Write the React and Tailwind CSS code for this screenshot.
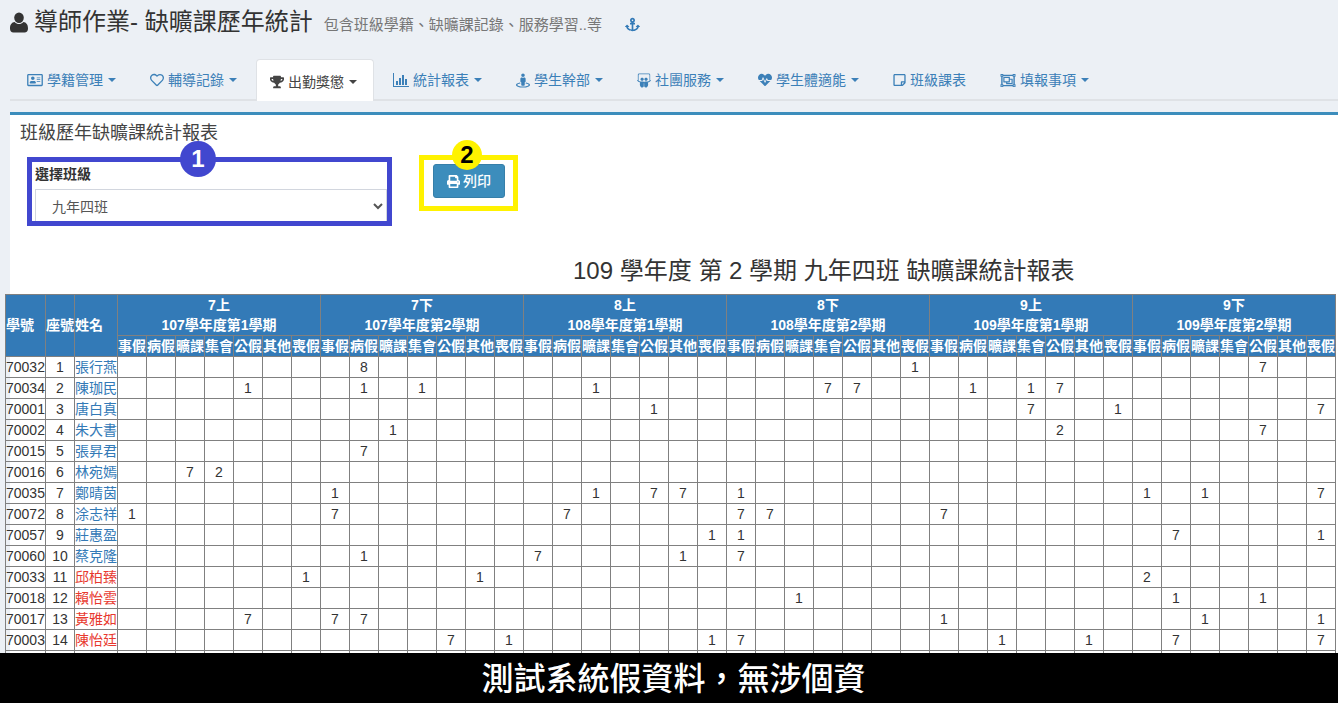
import React from "react";
import {
  FaAnchor,
  FaRegAddressCard,
  FaRegHeart,
  FaTrophy,
  FaStreetView,
  FaSlideshare,
  FaHeartbeat,
  FaRegStickyNote,
  FaRegObjectGroup,
  FaPrint,
} from "react-icons/fa";

const UserIcon = ({ className }) => (
  <svg viewBox="0 0 18 20" className={className} fill="currentColor">
    <ellipse cx="9" cy="5.2" rx="4.8" ry="5.2" />
    <path d="M4.6 9.6C6 11 7.4 11.6 9 11.6s3-.6 4.4-2C16.2 10 18 12 18 16.2 18 18.6 16.6 20 14.6 20H3.4C1.4 20 0 18.6 0 16.2 0 12 1.8 10 4.6 9.6z" />
  </svg>
);

const BarChartIcon = ({ className }) => (
  <svg viewBox="0 0 16 14" className={className} fill="currentColor">
    <path d="M0 0h1v13h15v1H0z" />
    <path d="M3 8h2v4H3zM6 5h2v7H6zM9 2h2v10H9zM12 6h2v6h-2z" />
  </svg>
);

const tabs = [
  { label: "學籍管理", icon: <FaRegAddressCard className="w-[16px] h-[14px]" />, caret: true },
  { label: "輔導記錄", icon: <FaRegHeart className="w-[14px] h-[14px]" />, caret: true },
  { label: "出勤獎懲", icon: <FaTrophy className="w-[14px] h-[14px]" />, caret: true, active: true },
  { label: "統計報表", icon: <BarChartIcon className="w-[16px] h-[14px]" />, caret: true },
  { label: "學生幹部", icon: <FaStreetView className="w-[14px] h-[15px]" />, caret: true },
  { label: "社團服務", icon: <FaSlideshare className="w-[14px] h-[15px]" />, caret: true },
  { label: "學生體適能", icon: <FaHeartbeat className="w-[14px] h-[14px]" />, caret: true },
  { label: "班級課表", icon: <FaRegStickyNote className="w-[13px] h-[14px]" /> },
  { label: "填報事項", icon: <FaRegObjectGroup className="w-[16px] h-[15px]" />, caret: true },
];

const semesters = [
  ["7上", "107學年度第1學期"],
  ["7下", "107學年度第2學期"],
  ["8上", "108學年度第1學期"],
  ["8下", "108學年度第2學期"],
  ["9上", "109學年度第1學期"],
  ["9下", "109學年度第2學期"],
];

const kinds = ["事假", "病假", "曠課", "集會", "公假", "其他", "喪假"];

// marks: column index (0-41) -> value
const students = [
  { id: "70032", seat: 1, name: "張行燕", marks: { 8: 8, 27: 1, 39: 7 } },
  { id: "70034", seat: 2, name: "陳珈民", marks: { 4: 1, 8: 1, 10: 1, 16: 1, 24: 7, 25: 7, 29: 1, 31: 1, 32: 7 } },
  { id: "70001", seat: 3, name: "唐白真", marks: { 18: 1, 31: 7, 34: 1, 41: 7 } },
  { id: "70002", seat: 4, name: "朱大書", marks: { 9: 1, 32: 2, 39: 7 } },
  { id: "70015", seat: 5, name: "張昇君", marks: { 8: 7 } },
  { id: "70016", seat: 6, name: "林宛嫣", marks: { 2: 7, 3: 2 } },
  { id: "70035", seat: 7, name: "鄭晴茵", marks: { 7: 1, 16: 1, 18: 7, 19: 7, 21: 1, 35: 1, 37: 1, 41: 7 } },
  { id: "70072", seat: 8, name: "涂志祥", marks: { 0: 1, 7: 7, 15: 7, 21: 7, 22: 7, 28: 7 } },
  { id: "70057", seat: 9, name: "莊惠盈", marks: { 20: 1, 21: 1, 36: 7, 41: 1 } },
  { id: "70060", seat: 10, name: "蔡克隆", marks: { 8: 1, 14: 7, 19: 1, 21: 7 } },
  { id: "70033", seat: 11, name: "邱柏臻", red: true, marks: { 6: 1, 12: 1, 35: 2 } },
  { id: "70018", seat: 12, name: "賴怡雲", red: true, marks: { 23: 1, 36: 1, 39: 1 } },
  { id: "70017", seat: 13, name: "黃雅如", red: true, marks: { 4: 7, 7: 7, 8: 7, 28: 1, 37: 1, 41: 1 } },
  { id: "70003", seat: 14, name: "陳怡廷", red: true, marks: { 11: 7, 13: 1, 20: 1, 21: 7, 30: 1, 33: 1, 36: 7, 41: 7 } },
  { id: "70004", seat: 15, name: "", red: true, marks: {} },
];

const cols = Array.from({ length: 42 }, (_, i) => i);

const App = () => {
  return (
    <div className="relative h-[703px] overflow-hidden bg-[#ecf0f5] text-[14px] text-[#333] font-['Liberation_Sans','Noto_Sans_CJK_TC',sans-serif]">
      {/* page title */}
      <div className="flex items-baseline h-[59px] pt-[5px] pl-[10px]">
        <UserIcon className="w-[18px] h-[21px] shrink-0 mr-[6px] self-center mb-[20px] text-[#333]" />
        <h1 className="text-[24px] leading-[34px] font-normal">導師作業- 缺曠課歷年統計</h1>
        <span className="ml-[11px] text-[15px] text-[#777]">包含班級學籍、缺曠課記錄、服務學習..等</span>
        <FaAnchor className="ml-[23px] w-[15px] h-[15px] text-[#337ab7] self-center mb-[15px]" />
      </div>

      {/* tabs */}
      <div className="flex ml-[10px] pl-[1px] h-[42px] border-b-2 border-[#dfe2e6]">
        {tabs.map((t) => (
          <div
            key={t.label}
            className={
              t.active
                ? "flex items-center h-[42px] pt-[2px] ml-[1px] pl-[13px] pr-[16px] mr-[3px] bg-white border border-b-0 border-[#dfe2e6] rounded-t text-[#444]"
                : "flex items-center h-[40px] pt-[2px] pl-[16px] pr-[15px] mr-[3px] text-[#3c80b8]"
            }
          >
            <span className="mr-[4px] flex items-center">{t.icon}</span>
            <span className="leading-[20px] whitespace-nowrap">{t.label}</span>
            {t.caret && (
              <span className="ml-[5px] w-0 h-0 border-x-4 border-t-4 border-x-transparent border-t-current" />
            )}
          </div>
        ))}
      </div>

      {/* panel */}
      <div className="mt-[11px] ml-[10px] bg-white border-t-[3px] border-[#3c8dbc] h-[600px]">
        <h3 className="h-[36px] pl-[10px] flex items-center text-[18px] font-normal text-[#444]">班級歷年缺曠課統計報表</h3>

        <div className="flex items-start mt-[4px] pl-[17px]">
          <div className="relative mt-[2px] w-[365px] h-[69px] border-[5px] border-[#4147cf]">
            <div className="h-full overflow-hidden pl-[3px]">
              <div className="font-bold leading-[20px] pt-[2px] mb-[5px] text-[#333]">選擇班級</div>
              <select
                defaultValue="九年四班"
                className="w-full h-[34px] pl-[12px] pt-[2px] bg-white border border-[#d2d6de] text-[14px] text-[#555]"
              >
                <option>九年四班</option>
              </select>
            </div>
            <div className="absolute left-[148px] -top-[21px] w-[36px] h-[36px] rounded-full bg-[#4147cf] text-white font-bold text-[24px] flex items-center justify-center">
              1
            </div>
          </div>

          <div className="relative ml-[27px] w-[99px] h-[56px] border-[5px] border-[#fff200] pt-[4px] pl-[9px]">
            <button className="flex items-center justify-center gap-[3px] w-[72px] h-[34px] rounded-[3px] bg-[#3c8dbc] border border-[#367fa9] text-white text-[14px] font-medium">
              <FaPrint className="w-[13px] h-[13px]" />
              列印
            </button>
            <div className="absolute left-[28px] -top-[20px] w-[30px] h-[30px] rounded-full bg-[#fff200] text-black font-bold text-[24px] flex items-center justify-center">
              2
            </div>
          </div>
        </div>

        <div className="mt-[27px] mb-[5px] pl-[563px] text-[24px] leading-[36px] text-[#333] whitespace-nowrap">
          109 學年度 第 2 學期 九年四班 缺曠課統計報表
        </div>

        {/* table sticks out of the panel on the left */}
        <table className="-ml-[5px] w-[1331px] table-fixed border-collapse">
          <colgroup>
            <col className="w-[40px]" />
            <col className="w-[29px]" />
            <col className="w-[43px]" />
            {cols.map((c) => (
              <col key={c} className="w-[29px]" />
            ))}
          </colgroup>
          <thead className="bg-[#337ab7] text-white font-bold">
            <tr className="h-[41px]">
              <th rowSpan={2} className="border border-[#808080] p-0 text-left whitespace-nowrap">學號</th>
              <th rowSpan={2} className="border border-[#808080] p-0 text-left whitespace-nowrap">座號</th>
              <th rowSpan={2} className="border border-[#808080] p-0 text-left whitespace-nowrap">姓名</th>
              {semesters.map(([term, year]) => (
                <th key={term} colSpan={7} className="border border-[#808080] p-0 text-center leading-[20px]">
                  <div>{term}</div>
                  <div>{year}</div>
                </th>
              ))}
            </tr>
            <tr className="h-[21px]">
              {cols.map((c) => (
                <th key={c} className="border border-[#808080] p-0 text-left leading-[20px] whitespace-nowrap">
                  {kinds[c % 7]}
                </th>
              ))}
            </tr>
          </thead>
          <tbody>
            {students.map((s) => (
              <tr key={s.seat} className="h-[21px]">
                <td className="border border-[#808080] p-0 leading-[20px]">{s.id}</td>
                <td className="border border-[#808080] p-0 text-center leading-[20px]">{s.seat}</td>
                <td className={`border border-[#808080] p-0 leading-[20px] whitespace-nowrap ${s.red ? "text-[#e8392f]" : "text-[#337ab7]"}`}>
                  {s.name}
                </td>
                {cols.map((c) => (
                  <td key={c} className="border border-[#808080] p-0 text-center leading-[20px]">
                    {s.marks[c]}
                  </td>
                ))}
              </tr>
            ))}
          </tbody>
        </table>
      </div>

      {/* notice bar over the page */}
      <div className="absolute left-0 right-0 bottom-0 h-[50px] bg-black text-white text-[32px] leading-[52px] font-medium text-center pl-[9px]">
        測試系統假資料，無涉個資
      </div>
    </div>
  );
};

export default App;
